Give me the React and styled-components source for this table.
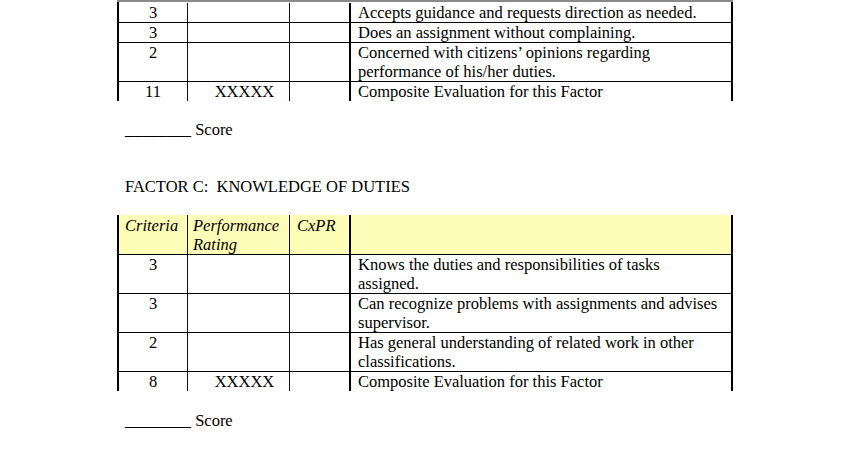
import React from "react";
import styled, { createGlobalStyle } from "styled-components";

const Global = createGlobalStyle`
  html, body { margin: 0; padding: 0; background: #ffffff; }
  body {
    font-family: "Liberation Serif", "Times New Roman", serif;
    font-size: 16.5px;
    color: #000;
  }
`;

const Page = styled.div`
  width: 850px;
  height: 461px;
  overflow: hidden;
  padding-left: 117px;
  box-sizing: border-box;
  display: flex;
  flex-direction: column;
  align-items: flex-start;
`;

const Table = styled.div`
  width: 616px;
  box-sizing: border-box;
  border-top: ${(p) => (p.$cut ? "2px solid #8a8a8a" : "none")};
  margin-top: ${(p) => p.$mt || 0}px;
`;

const Row = styled.div`
  display: grid;
  grid-template-columns: 69px 102px 61px 380px;
  box-sizing: border-box;
  border-left: 2px solid #000;
  border-right: 2px solid #000;
  border-bottom: ${(p) => (p.$last ? "none" : "1px solid #000")};
  background: ${(p) => (p.$head ? "#fdfdb8" : "transparent")};
  padding-top: ${(p) => p.$pt || 0}px;
`;

const Cell = styled.div`
  box-sizing: border-box;
  padding: 0 6px 0 ${(p) => p.$pl ?? 6}px;
  line-height: ${(p) => (p.$head ? "18.5px" : "19px")};
  text-align: ${(p) => (p.$center ? "center" : "left")};
  font-style: ${(p) => (p.$head ? "italic" : "normal")};
  white-space: nowrap;
  border-right: ${(p) =>
    p.$edge === "thick" ? "2px solid #000" : p.$edge === "none" ? "none" : "1px solid #111"};
  padding-top: ${(p) => (p.$head ? 2 : 0)}px;
`;

const Para = styled.p`
  margin: ${(p) => p.$mt}px 0 0 8px;
  line-height: 19px;
  white-space: pre;
`;

const DataRow = ({ c, pr = "", lines, last, pt }) => (
  <Row $last={last} $pt={pt}>
    <Cell $center>{c}</Cell>
    <Cell $center $pl={18}>{pr}</Cell>
    <Cell $edge="thick" />
    <Cell $edge="none" $pl={7}>
      {lines.map((l, i) => (
        <React.Fragment key={i}>
          {i > 0 && <br />}
          {l}
        </React.Fragment>
      ))}
    </Cell>
  </Row>
);

export default function App() {
  return (
    <>
      <Global />
      <Page>
        <Table $cut>
          <DataRow c="3" pt={1} lines={["Accepts guidance and requests direction as needed."]} />
          <DataRow c="3" lines={["Does an assignment without complaining."]} />
          <DataRow
            c="2"
            lines={["Concerned with citizens\u2019 opinions regarding", "performance of his/her duties."]}
          />
          <DataRow c="11" pr="XXXXX" last lines={["Composite Evaluation for this Factor"]} />
        </Table>

        <Para $mt={19}>{"________ Score"}</Para>
        <Para $mt={38}>{"FACTOR C:  KNOWLEDGE OF DUTIES"}</Para>

        <Table $mt={19}>
          <Row $head>
            <Cell $head>Criteria</Cell>
            <Cell $head $pl={5}>
              Performance
              <br />
              Rating
            </Cell>
            <Cell $head $edge="thick" $pl={7}>CxPR</Cell>
            <Cell $head $edge="none" />
          </Row>
          <DataRow c="3" lines={["Knows the duties and responsibilities of tasks", "assigned."]} />
          <DataRow
            c="3"
            lines={["Can recognize problems with assignments and advises", "supervisor."]}
          />
          <DataRow
            c="2"
            lines={["Has general understanding of related work in other", "classifications."]}
          />
          <DataRow c="8" pr="XXXXX" last lines={["Composite Evaluation for this Factor"]} />
        </Table>

        <Para $mt={20}>{"________ Score"}</Para>
      </Page>
    </>
  );
}
